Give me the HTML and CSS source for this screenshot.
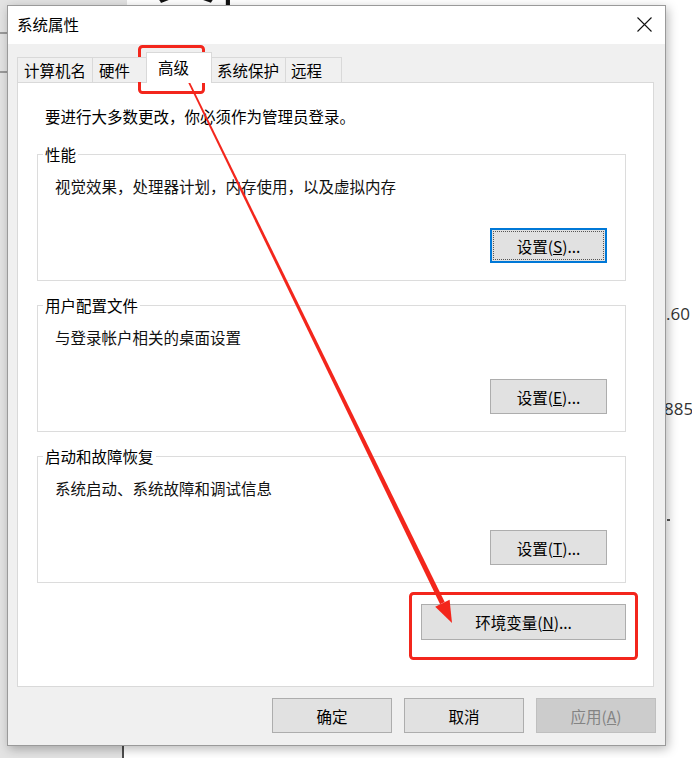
FILE: index.html
```html
<!DOCTYPE html>
<html lang="zh-CN">
<head>
  <meta charset="UTF-8" />
  <title>系统属性</title>
  <link rel="stylesheet" href="styles.css">
</head>
<body>
  <div class="desktop">
    <!-- 背后桌面的零碎 -->
    <div class="bg-left"><span class="bg-line l1"></span><span class="bg-line l2"></span></div>
    <div class="bg-top"></div>
    <div class="bg-glyph">文]</div>
    <div class="bg-bottom"></div>
    <div class="bg-bar"></div>
    <div class="bg-num num-a">.60</div>
    <div class="bg-num num-b">885</div>
    <div class="bg-tick"></div>

    <div class="dialog">
      <div class="titlebar">
        <span class="title">系统属性</span>
        <svg class="close" width="15" height="15" viewBox="0 0 15 15">
          <path d="M0.5 0.5 L14.5 14.5 M14.5 0.5 L0.5 14.5" stroke="#111" stroke-width="1.1" fill="none"/>
        </svg>
      </div>

      <div class="dialogBody">
        <div class="tabs">
          <div class="tab t1">计算机名</div>
          <div class="tab t2">硬件</div>
          <div class="tab t3 active">高级</div>
          <div class="tab t4">系统保护</div>
          <div class="tab t5">远程</div>
        </div>

        <div class="panel">
          <p class="intro">要进行大多数更改，你必须作为管理员登录。</p>

          <fieldset class="group">
            <legend>性能</legend>
            <div class="desc">视觉效果，处理器计划，内存使用，以及虚拟内存</div>
            <div class="groupActions">
              <button class="btn btnFocus">设置(<u>S</u>)...</button>
            </div>
          </fieldset>

          <fieldset class="group">
            <legend>用户配置文件</legend>
            <div class="desc">与登录帐户相关的桌面设置</div>
            <div class="groupActions">
              <button class="btn">设置(<u>E</u>)...</button>
            </div>
          </fieldset>

          <fieldset class="group">
            <legend>启动和故障恢复</legend>
            <div class="desc">系统启动、系统故障和调试信息</div>
            <div class="groupActions">
              <button class="btn">设置(<u>T</u>)...</button>
            </div>
          </fieldset>

          <div class="envRow">
            <button class="btn btnEnv">环境变量(<u>N</u>)...</button>
          </div>
        </div>

        <div class="footer">
          <button class="btn btnFooter">确定</button>
          <button class="btn btnFooter">取消</button>
          <button class="btn btnFooter" disabled>应用(<u>A</u>)</button>
        </div>
      </div>
    </div>

    <!-- 红色标注 -->
    <svg class="marks" width="692" height="758" viewBox="0 0 692 758">
      <rect x="139.5" y="46.5" width="64" height="46" rx="3" fill="none" stroke="#f3261c" stroke-width="3"/>
      <rect x="410.5" y="593.5" width="226" height="65" rx="3" fill="none" stroke="#f3261c" stroke-width="3"/>
      <polygon points="181.3,68.4 182.7,67.6 444.7,602.1 440.1,604.3" fill="#f3261c"/>
      <polygon points="452,623 435.2,606.7 449.6,599.7" fill="#f3261c"/>
    </svg>
  </div>
</body>
</html>
```

FILE: styles.css
```css
body {
  margin: 0;
  padding: 0;
  background-color: #fff;
  font-family: "Noto Sans CJK SC", "Noto Sans", sans-serif;
  font-size: 15.5px;
  line-height: 20px;
  color: #111;
}

.desktop {
  position: relative;
  width: 692px;
  height: 758px;
  overflow: hidden;
  background-color: #fff;
}

/* ---- background bits ---- */
.bg-left {
  position: absolute;
  left: 0;
  top: 0;
  width: 8px;
  height: 758px;
  background-color: #e3e3e3;
}

.bg-line {
  position: absolute;
  left: 0;
  width: 8px;
  height: 2px;
  background-color: #9a9a9a;
}

.l1 { top: 32px; }
.l2 { top: 71px; }

.bg-top {
  position: absolute;
  left: 0;
  top: 0;
  width: 127px;
  height: 6px;
  background-color: #e3e3e3;
}

.bg-glyph {
  position: absolute;
  left: 156px;
  top: -58px;
  font-size: 60px;
  line-height: 60px;
  color: #111;
}

.bg-bottom {
  position: absolute;
  left: 0;
  top: 745px;
  width: 122px;
  height: 13px;
  background-color: #e3e3e3;
}

.bg-bar {
  position: absolute;
  left: 122px;
  top: 745px;
  width: 2px;
  height: 13px;
  background-color: #4d4d4d;
}

.bg-num {
  position: absolute;
  left: 666px;
  font-family: "Open Sans", "Noto Sans", sans-serif;
  font-size: 17px;
  color: #333;
}

.num-a { top: 304px; }
.num-b { top: 399px; left: 664px; }

.bg-tick {
  position: absolute;
  left: 667px;
  top: 519px;
  width: 3px;
  height: 2px;
  background-color: #555;
}

/* ---- dialog ---- */
.dialog {
  position: absolute;
  left: 7px;
  top: 5px;
  width: 659px;
  height: 741px;
  box-sizing: border-box;
  border: 1px solid #9a9a9a;
  background-color: #f0f0f0;
  box-shadow: 2px 3px 10px rgba(0, 0, 0, 0.28);
  display: flex;
  flex-direction: column;
}

.titlebar {
  height: 38px;
  flex-shrink: 0;
  background-color: #fff;
  display: flex;
  align-items: center;
  justify-content: space-between;
  padding: 0 13px 0 9px;
}

.title {
  color: #000;
  margin-top: -2px;
}

.close {
  display: block;
  margin-top: -1px;
}

.dialogBody {
  flex: 1;
  padding: 8px 11px 0 9px;
  display: flex;
  flex-direction: column;
}

.tabs {
  display: flex;
  align-items: flex-end;
  height: 30px;
  position: relative;
  z-index: 1;
}

.tab {
  box-sizing: border-box;
  height: 25px;
  border: 1px solid #d9d9d9;
  border-bottom: none;
  background-color: #f0f0f0;
  display: flex;
  align-items: center;
  margin-left: -1px;
  color: #000;
  white-space: nowrap;
}

.t1 { width: 76px; padding-left: 6px; margin-left: 0; }
.t2 { width: 55px; padding-left: 6px; }
.t3 { width: 66px; padding-left: 11px; }
.t4 { width: 75px; padding-left: 5px; }
.t5 { width: 57px; padding-left: 5px; }

.tab.active {
  height: 31px;
  margin-bottom: -1px;
  background-color: #fff;
  padding-bottom: 2px;
}

.panel {
  box-sizing: border-box;
  height: 605px;
  background-color: #fff;
  border: 1px solid #d9d9d9;
  flex-shrink: 0;
}

.intro {
  margin: 23px 0 0 27px;
  color: #000;
}

.group {
  box-sizing: border-box;
  width: 589px;
  margin: 14px 0 0 19px;
  padding: 0 0 17px 0;
  border: 1px solid #dcdcdc;
  min-inline-size: 0;
}

.group:first-of-type {
  margin-top: 18px;
}

.group legend {
  margin-left: 5px;
  padding: 0 2px;
  color: #000;
}

.desc {
  margin: 12px 0 0 17px;
  color: #111;
}

.groupActions {
  display: flex;
  justify-content: flex-end;
  margin: 32px 18px 0 0;
}

.btn {
  box-sizing: border-box;
  width: 117px;
  height: 35px;
  padding: 0;
  border: 1px solid #adadad;
  background-color: #e1e1e1;
  font-family: inherit;
  font-size: 15.5px;
  color: #000;
  display: flex;
  align-items: center;
  justify-content: center;
}

.btnFocus {
  border: 2px solid #0078d7;
  outline: 1px dotted #555;
  outline-offset: -4px;
}

.envRow {
  display: flex;
  justify-content: flex-end;
  margin: 21px 27px 0 0;
}

.btnEnv {
  width: 205px;
  height: 36px;
}

.footer {
  display: flex;
  justify-content: flex-end;
  gap: 12px;
  margin: 11px -2px 0 0;
}

.btnFooter {
  width: 120px;
}

.btn:disabled {
  background-color: #cccccc;
  border-color: #bfbfbf;
  color: #838383;
}

.marks {
  position: absolute;
  left: 0;
  top: 0;
  pointer-events: none;
}
```
